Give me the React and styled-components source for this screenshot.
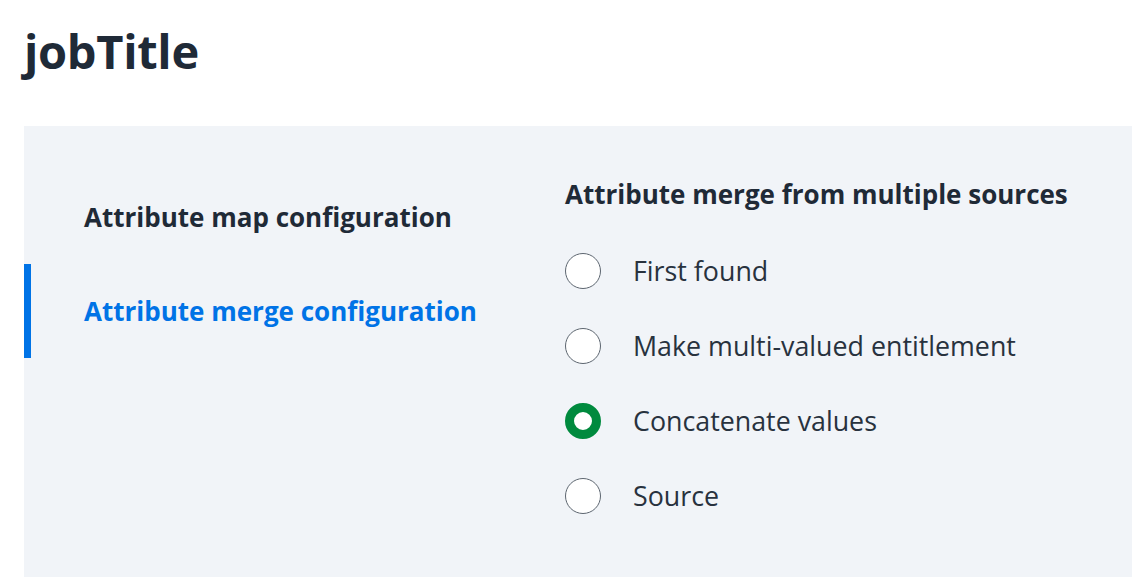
import React, { useState } from 'react';
import styled, { createGlobalStyle } from 'styled-components';

const GlobalStyle = createGlobalStyle`
  body {
    margin: 0;
    background: #ffffff;
    font-family: 'Open Sans', 'Noto Sans', sans-serif;
    color: #1f2a37;
  }
`;

const Page = styled.div`
  padding: 24px 0 0 24px;
`;

const Title = styled.h1`
  margin: 0;
  font-size: 47px;
  font-weight: 700;
  line-height: 54px;
  letter-spacing: -0.3px;
  color: #1f2a37;
`;

const Panel = styled.div`
  margin-top: 48px;
  background: #f1f4f8;
  display: grid;
  grid-template-columns: 541px 1fr;
  min-height: 460px;
`;

const Nav = styled.nav`
  display: flex;
  flex-direction: column;
  padding-top: 44px;
`;

const NavItem = styled.div`
  height: 94px;
  display: flex;
  align-items: center;
  padding-left: 53px;
  border-left: 7px solid ${p => (p.active ? '#0073e6' : 'transparent')};
  font-size: 26px;
  font-weight: 700;
  color: ${p => (p.active ? '#0073e6' : '#1f2a37')};
  cursor: pointer;
`;

const Options = styled.div`
  padding-top: 51px;
  display: flex;
  flex-direction: column;
`;

const Heading = styled.div`
  font-size: 26px;
  font-weight: 700;
  line-height: 34px;
  color: #1f2a37;
  margin-bottom: 22px;
`;

const Option = styled.label`
  display: flex;
  align-items: center;
  gap: 32px;
  height: 75px;
  font-size: 26.8px;
  color: #28323e;
  cursor: pointer;
`;

const Radio = styled.span`
  width: 36px;
  height: 36px;
  box-sizing: border-box;
  border-radius: 50%;
  background: #ffffff;
  border: ${p => (p.checked ? '9px solid #008a3e' : '1px solid #5d6670')};
  flex-shrink: 0;
`;

const choices = ['First found', 'Make multi-valued entitlement', 'Concatenate values', 'Source'];

export default function App() {
  const [active, setActive] = useState(1);
  const [choice, setChoice] = useState(2);

  return (
    <Page>
      <GlobalStyle />
      <Title>jobTitle</Title>
      <Panel>
        <Nav>
          {['Attribute map configuration', 'Attribute merge configuration'].map((t, i) => (
            <NavItem key={t} active={active === i} onClick={() => setActive(i)}>
              {t}
            </NavItem>
          ))}
        </Nav>
        <Options>
          <Heading>Attribute merge from multiple sources</Heading>
          {choices.map((c, i) => (
            <Option key={c} onClick={() => setChoice(i)}>
              <Radio checked={choice === i} />
              {c}
            </Option>
          ))}
        </Options>
      </Panel>
    </Page>
  );
}
